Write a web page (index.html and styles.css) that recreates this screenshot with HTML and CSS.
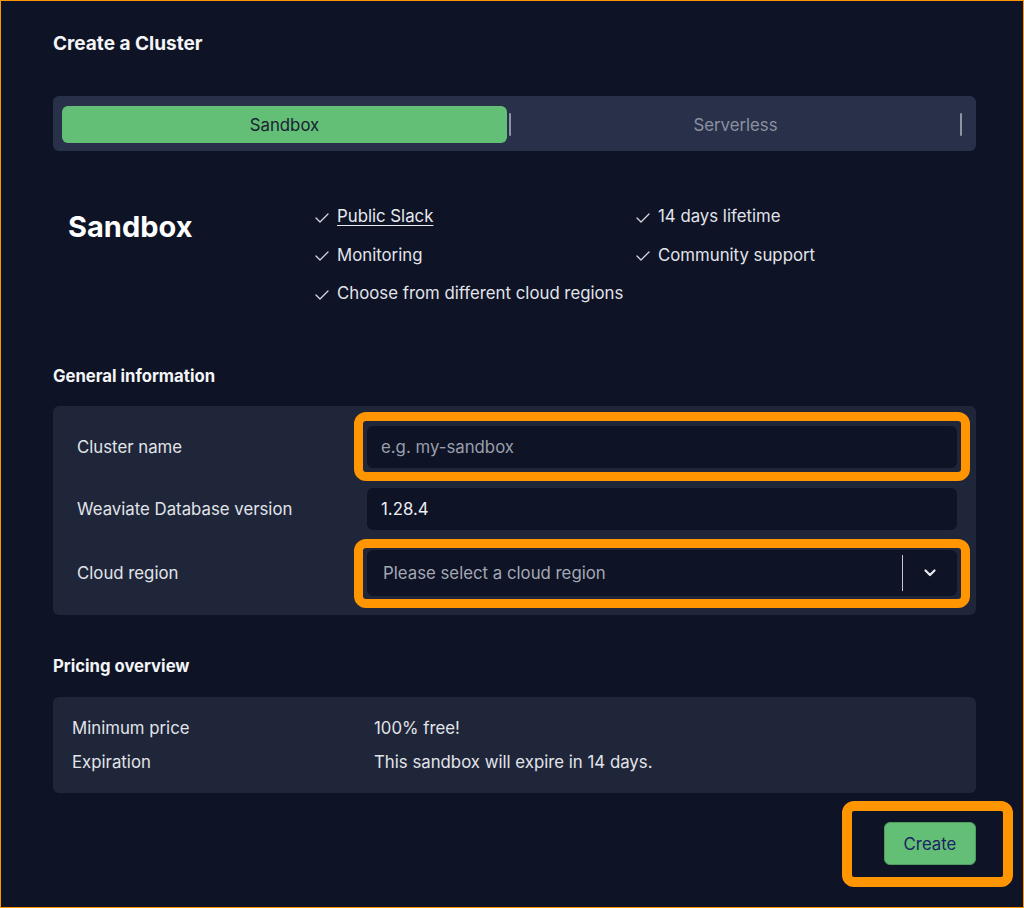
FILE: index.html
```html
<!DOCTYPE html>
<html>
<head>
<meta charset="utf-8">
<link rel="stylesheet" href="styles.css">
</head>
<body>
<div class="frame">
  <h1 class="title">Create a Cluster</h1>

  <div class="tabs">
    <div class="tab active">Sandbox</div>
    <div class="tab-div"></div>
    <div class="tab">Serverless</div>
    <div class="tab-div"></div>
  </div>

  <div class="plan">
    <h2 class="plan-name">Sandbox</h2>
    <ul class="features">
      <li><svg class="chk" viewBox="0 0 14 10"><polyline points="1,5 5,9 13,1"/></svg><a class="link">Public Slack</a></li>
      <li><svg class="chk" viewBox="0 0 14 10"><polyline points="1,5 5,9 13,1"/></svg>14 days lifetime</li>
      <li><svg class="chk" viewBox="0 0 14 10"><polyline points="1,5 5,9 13,1"/></svg>Monitoring</li>
      <li><svg class="chk" viewBox="0 0 14 10"><polyline points="1,5 5,9 13,1"/></svg>Community support</li>
      <li class="wide"><svg class="chk" viewBox="0 0 14 10"><polyline points="1,5 5,9 13,1"/></svg>Choose from different cloud regions</li>
    </ul>
  </div>

  <h3 class="section">General information</h3>
  <div class="card form">
    <div class="label">Cluster name</div>
    <div class="field"><div class="input placeholder">e.g. my-sandbox</div><div class="hl hl1"></div></div>
    <div class="label">Weaviate Database version</div>
    <div class="field"><div class="input">1.28.4</div></div>
    <div class="label">Cloud region</div>
    <div class="field">
      <div class="select">
        <span class="select-text">Please select a cloud region</span>
        <span class="select-sep"></span>
        <span class="select-arrow"><svg viewBox="0 0 12 8"><polyline points="1.5,1.5 6,6 10.5,1.5"/></svg></span>
      </div>
      <div class="hl hl2"></div>
    </div>
  </div>

  <h3 class="section pricing-h">Pricing overview</h3>
  <div class="card pricing">
    <div class="p-label">Minimum price</div><div class="p-val">100% free!</div>
    <div class="p-label">Expiration</div><div class="p-val">This sandbox will expire in 14 days.</div>
  </div>

  <div class="actions">
    <div class="btn-wrap">
      <button class="btn">Create</button>
      <div class="hl hl3"></div>
    </div>
  </div>
</div>
</body>
</html>
```
FILE: styles.css
```css
* { box-sizing: border-box; }
html, body { margin: 0; padding: 0; background: #0e1326; }
body { font-family: Inter, "Noto Sans", sans-serif; color: #e4e6eb; font-size: 16.8px; }
.frame {
  width: 1024px;
  height: 908px;
  border: 1px solid #ff9500;
  padding: 31px 47px 0 52px;
  background: #0e1326;
}
.title {
  margin: 0 0 40px;
  font-size: 19px;
  line-height: 24px;
  font-weight: 700;
  color: #f4f5f7;
}
.tabs {
  display: flex;
  align-items: center;
  height: 55px;
  padding: 10px 12px 8px 9px;
  background: #29314a;
  border-radius: 6px;
}
.tab {
  flex: 1;
  height: 37px;
  display: flex;
  align-items: center;
  justify-content: center;
  font-size: 16.8px;
  color: #8a90a0;
  border-radius: 6px;
}
.tab.active { background: #62bf75; color: #1b2234; }
.tab-div {
  width: 2px;
  height: 23px;
  margin: 0 2px;
  background: #8e94a3;
  border-radius: 1px;
}
.plan {
  display: flex;
  margin-top: 53px;
  padding-left: 15px;
}
.plan-name {
  width: 247px;
  margin: 5px 0 0;
  font-size: 29px;
  line-height: 36px;
  font-weight: 700;
  color: #ffffff;
}
.features {
  list-style: none;
  margin: 0;
  padding: 0;
  display: grid;
  grid-template-columns: 321px auto;
  row-gap: 14.5px;
  font-size: 16.8px;
  line-height: 24px;
  color: #e2e4ea;
}
.features li { display: flex; align-items: center; }
.features li.wide { grid-column: 1 / 3; }
.chk {
  width: 14px;
  height: 10px;
  margin-right: 8px;
  margin-top: 3px;
  fill: none;
  stroke: #d4d7de;
  stroke-width: 1.3;
  stroke-linecap: round;
  stroke-linejoin: round;
}
.link { text-decoration: underline; text-underline-offset: 3px; color: #e8eaef; }
.section {
  margin: 60px 0 19px;
  font-size: 16.7px;
  line-height: 22px;
  font-weight: 700;
  color: #f4f5f7;
}
.card { background: #1f2639; border-radius: 6px; }
.form {
  display: grid;
  grid-template-columns: 290px 1fr;
  row-gap: 20px;
  align-items: center;
  padding: 20px 19px 19px 24px;
}
.label { font-size: 16.8px; color: #e2e4ea; }
.field { position: relative; }
.input {
  height: 42px;
  display: flex;
  align-items: center;
  padding-left: 14px;
  background: #0e1326;
  border-radius: 6px;
  font-size: 16.8px;
  color: #eceef2;
}
.input.placeholder { color: #9a9fab; }
.select {
  height: 46px;
  display: flex;
  align-items: center;
  background: #0e1326;
  border-radius: 6px;
  font-size: 16.8px;
}
.select-text { flex: 1; padding-left: 16px; color: #a3a8b3; }
.select-sep { width: 1px; height: 36px; background: #c4c8d0; }
.select-arrow {
  width: 54px;
  display: flex;
  justify-content: center;
  align-items: center;
}
.select-arrow svg {
  width: 12px;
  height: 8px;
  fill: none;
  stroke: #e6e8ec;
  stroke-width: 2.2;
  stroke-linecap: round;
  stroke-linejoin: round;
}
.hl {
  position: absolute;
  border: 9px solid #ff9500;
  border-radius: 12px;
  pointer-events: none;
}
.hl1 { left: -13px; right: -13px; top: -14px; bottom: -13px; }
.hl2 { left: -13px; right: -13px; top: -11px; bottom: -12px; }
.pricing-h { margin-top: 40px; margin-bottom: 20px; }
.pricing {
  display: grid;
  grid-template-columns: 302px 1fr;
  row-gap: 10px;
  padding: 19px 19px 19px 19px;
  font-size: 16.8px;
  line-height: 24px;
  color: #e2e4ea;
}
.actions {
  display: flex;
  justify-content: flex-end;
  margin-top: 29px;
}
.btn-wrap { position: relative; }
.btn {
  display: block;
  width: 92px;
  height: 43px;
  border: 1px solid #4f9c61;
  border-radius: 6px;
  background: #62bf75;
  font-family: Inter, "Noto Sans", sans-serif;
  font-size: 16.8px;
  color: #1d2463;
}
.hl3 {
  left: -42px; right: -37px; top: -21px; bottom: -22px;
  border-width: 10px;
}
```
